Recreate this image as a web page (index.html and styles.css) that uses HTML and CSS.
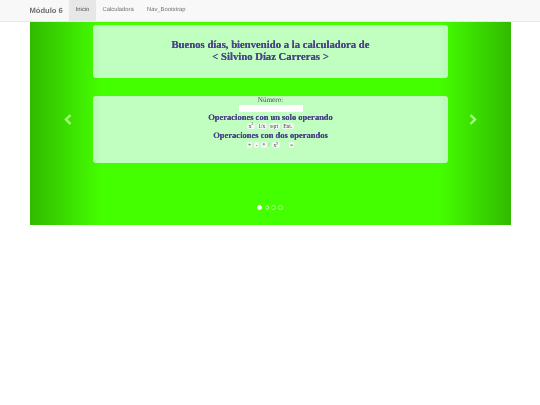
FILE: index.html
```html
<!DOCTYPE html>
<html lang="es">
<head>
    <meta charset="UTF-8">
    <title>Módulo 6</title>
    <link rel="stylesheet" href="styles.css">
</head>
<body>
    <nav class="navbar">
        <div class="nav-inner">
            <a class="brand">Módulo 6</a>
            <a class="nav-link active">Inicio</a>
            <a class="nav-link">Calculadora</a>
            <a class="nav-link">Nav_Bootstrap</a>
        </div>
    </nav>

    <div class="carousel">
        <div class="panel panel-title">
            <h1>Buenos días, bienvenido a la calculadora de<br>&lt; Silvino Díaz Carreras &gt;</h1>
        </div>
        <div class="panel panel-calc">
            <label class="num-label" for="numero">Número:</label>
            <input class="num-input" type="text" id="numero">
            <h2>Operaciones con un solo operando</h2>
            <div class="ops">
                <button>x<sup>2</sup></button>
                <button>1/x</button>
                <button>sqrt</button>
                <button>Ent.</button>
            </div>
            <h2>Operaciones con dos operandos</h2>
            <div class="ops ops-two">
                <button>+</button>
                <button>-</button>
                <button>*</button>
                <span>/</span>
                <button>x<sup>y</sup></button>
                <button class="equals">=</button>
            </div>
        </div>

        <a class="control control-left">
            <svg width="8" height="11" viewBox="0 0 8 11"><path d="M6.5 1 L2 5.5 L6.5 10" fill="none" stroke="#a8ff88" stroke-width="2.4"/></svg>
        </a>
        <a class="control control-right">
            <svg width="8" height="11" viewBox="0 0 8 11"><path d="M1.5 1 L6 5.5 L1.5 10" fill="none" stroke="#a8ff88" stroke-width="2.4"/></svg>
        </a>

        <div class="dots">
            <span class="dot on"></span>
            <span class="dot"></span>
            <span class="dot"></span>
            <span class="dot"></span>
        </div>
    </div>
</body>
</html>
```

FILE: styles.css
```css
body {
    margin: 0;
    background: #fff;
    font-family: "Liberation Serif", serif;
    text-rendering: geometricPrecision;
}
.navbar {
    height: 21px;
    background: #f8f8f8;
    border-bottom: 1px solid #e7e7e7;
}
.nav-inner {
    display: flex;
    align-items: stretch;
    height: 100%;
    margin: 0 0 0 29.5px;
    font-family: "Liberation Sans", sans-serif;
}
.brand {
    font-size: 7.6px;
    font-weight: bold;
    line-height: 21px;
    color: #6f6f6f;
    margin-right: 6.3px;
    filter: blur(0.2px);
}
.nav-link {
    font-size: 5.85px;
    line-height: 21px;
    color: #6f6f6f;
    padding: 0 6.6px;
    filter: blur(0.2px);
}
.nav-link.active {
    background: #e7e7e7;
    color: #505050;
}
.carousel {
    position: relative;
    box-sizing: border-box;
    width: 481px;
    height: 203px;
    margin: 0 0 0 29.5px;
    padding: 3px 62.5px 0 63.5px;
    background: #44ff00;
    display: flex;
    flex-direction: column;
    gap: 18px;
}
.panel {
    background: #c0ffc0;
    border-radius: 3px;
    color: #4a4488;
    text-align: center;
}
.panel-title {
    height: 53px;
    padding-top: 14px;
    box-sizing: border-box;
}
h1 {
    margin: 0;
    font-size: 10.7px;
    line-height: 12px;
    font-weight: bold;
    text-shadow: 0 0 0.4px #4a4488;
    filter: blur(0.25px);
}
.panel-calc {
    height: 67px;
    display: flex;
    flex-direction: column;
    align-items: center;
}
.num-label {
    font-size: 7.2px;
    line-height: 9px;
    color: #4a4a60;
    filter: blur(0.2px);
}
.num-input {
    box-sizing: border-box;
    width: 64px;
    height: 7px;
    padding: 0;
    border: 0;
    background: #fff;
}
h2 {
    margin: 0;
    font-size: 8.5px;
    line-height: 10px;
    font-weight: bold;
    text-shadow: 0 0 0.4px #4a4488;
    filter: blur(0.25px);
}
.ops {
    display: flex;
    align-items: center;
    justify-content: center;
    height: 7px;
    gap: 2px;
    font-size: 5.5px;
    margin-top: 0.5px;
    color: #444;
}
.ops-two {
    margin-top: 1.5px;
}
.ops button {
    border: 0;
    border-radius: 2px;
    background: #f2f7f2;
    color: #444;
    font-family: "Liberation Serif", serif;
    font-size: 5.5px;
    line-height: 6px;
    height: 6px;
    padding: 0 1.4px;
    filter: blur(0.2px);
}
.ops sup {
    font-size: 3.8px;
    line-height: 0;
}
.ops .equals {
    margin-left: 7px;
}
.control {
    position: absolute;
    top: 0;
    bottom: 0;
    width: 72px;
    display: flex;
    align-items: center;
    justify-content: center;
    padding-bottom: 9px;
    box-sizing: border-box;
}
.control-left {
    left: 0;
    padding-left: 4px;
    background: linear-gradient(to right, rgba(0, 0, 0, 0.27), rgba(0, 0, 0, 0));
}
.control-right {
    right: 0;
    padding-right: 3px;
    background: linear-gradient(to left, rgba(0, 0, 0, 0.27), rgba(0, 0, 0, 0));
}
.dots {
    position: absolute;
    left: 0;
    right: 0;
    bottom: 15px;
    display: flex;
    justify-content: center;
    align-items: center;
    gap: 2.2px;
}
.dot {
    width: 4.5px;
    height: 4.5px;
    box-sizing: border-box;
    border: 0.5px solid #a8ff88;
    border-radius: 50%;
}
.dot.on {
    width: 5px;
    height: 5px;
    background: #fff;
    border-color: #fff;
}
```
